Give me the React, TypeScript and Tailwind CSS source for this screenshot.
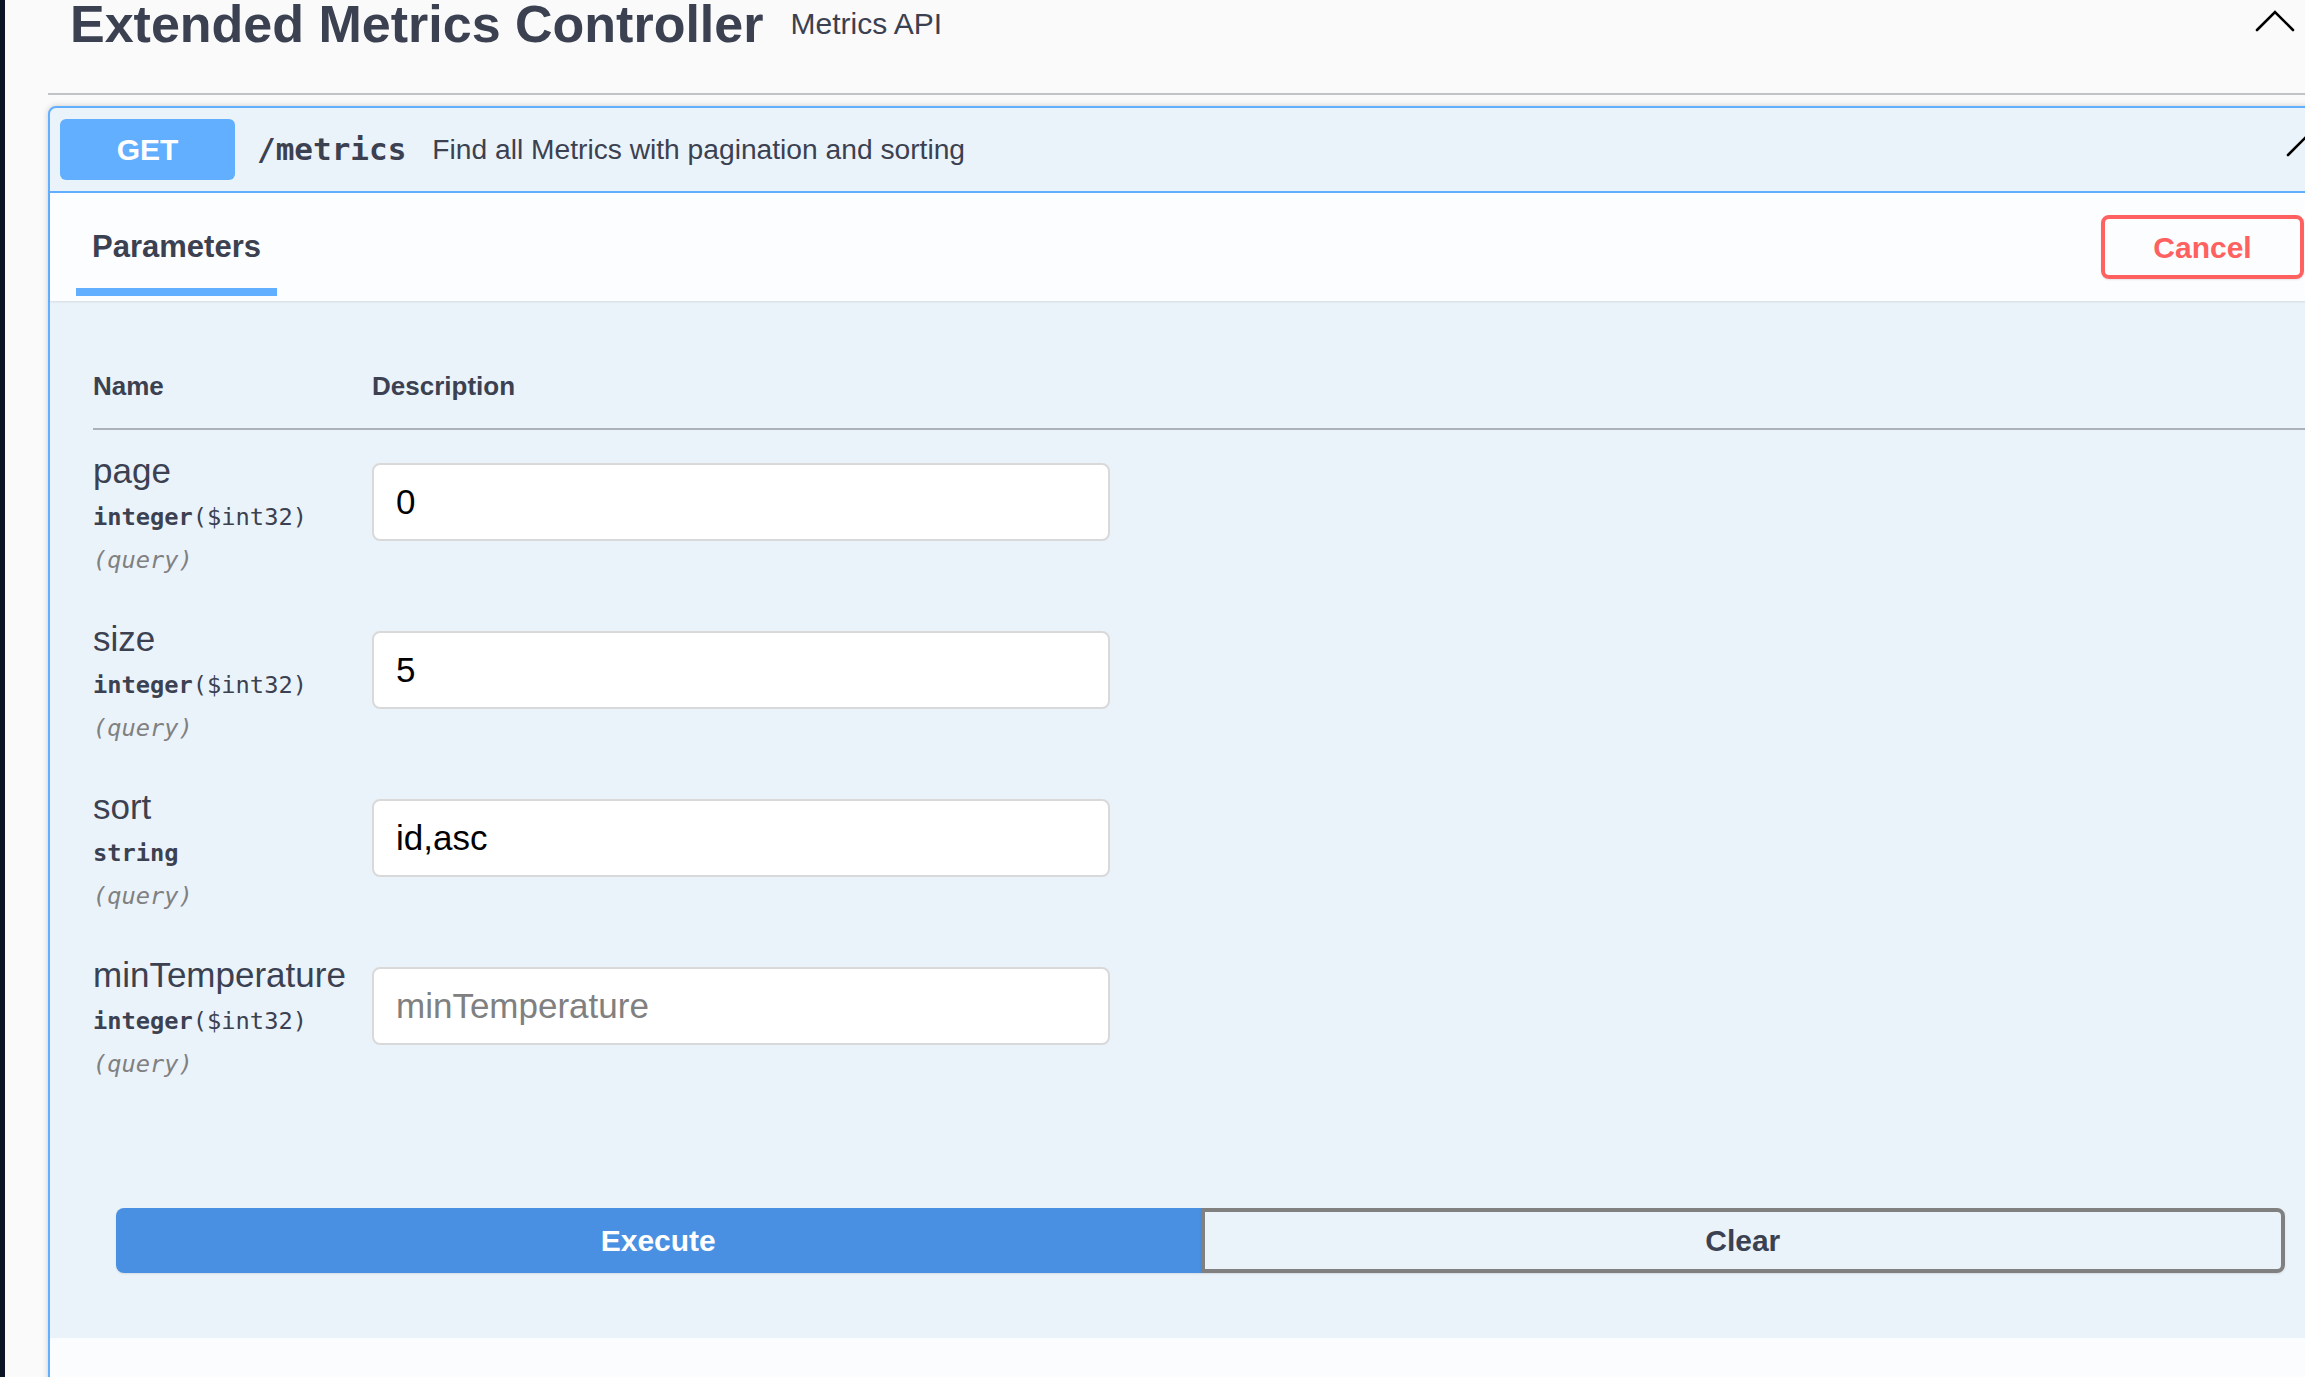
const sans = { fontFamily: '"Liberation Sans", Arial, sans-serif' };

const params = [
  { name: "page", type: "integer", format: "($int32)", value: "0" },
  { name: "size", type: "integer", format: "($int32)", value: "5" },
  { name: "sort", type: "string", format: "", value: "id,asc" },
  { name: "minTemperature", type: "integer", format: "($int32)", value: "" },
];

function Chevron({ className }: { className?: string }) {
  return (
    <svg className={className} width="40" height="22" viewBox="0 0 40 22" fill="none">
      <path d="M2 20 L20 2 L38 20" stroke="#000" strokeWidth="2.6" strokeLinecap="round" strokeLinejoin="miter" />
    </svg>
  );
}

function ParamRow({ p }: { p: (typeof params)[number] }) {
  return (
    <div className="flex h-[168px]">
      <div className="w-[279px] shrink-0 pt-[22px]">
        <div className="text-[35px] leading-[38px] text-[#3b4151]">{p.name}</div>
        <div className="mt-[13px] font-['DejaVu_Sans_Mono',monospace] text-[23.7px] leading-[28px] font-bold text-[#3b4151]">
          {p.type}
          {p.format && <span className="font-normal text-[#3b4151]">{p.format}</span>}
        </div>
        <div className="mt-[15px] font-['DejaVu_Sans_Mono',monospace] text-[23.7px] leading-[28px] italic text-[#808080]">
          (query)
        </div>
      </div>
      <div className="pt-[33px]">
        <input
          defaultValue={p.value}
          placeholder={p.name}
          className="h-[78px] w-[738px] rounded-[8px] border-2 border-[#d9d9d9] bg-white pl-[22px] text-[35px] text-black outline-none placeholder:text-[#808080]"
          style={sans}
        />
      </div>
    </div>
  );
}

export default function App() {
  return (
    <div className="flex h-screen w-screen overflow-hidden bg-[#fafafa]" style={sans}>
      <div className="w-[5px] shrink-0 bg-[#0b1426]" />
      <div className="ml-[43px] w-[2305px] shrink-0">
        {/* tag header */}
        <div className="h-[95px] border-b-2 border-[#c1c3c7]">
          <div className="flex h-[48px] items-center pl-[22px]">
            <h3 className="text-[52px] leading-[52px] font-bold text-[#3b4151]">Extended Metrics Controller</h3>
            <small className="ml-[27px] text-[30px] leading-[34px] text-[#3b4151]">Metrics API</small>
            <Chevron className="mb-[6px] ml-auto mr-[58px]" />
          </div>
        </div>

        {/* opblock */}
        <div className="mt-[11px] rounded-[8px] border-2 border-[#61affe] bg-[#ebf3fa] shadow-[0_0_6px_rgba(0,0,0,0.19)]">
          <div className="flex h-[85px] items-center border-b-2 border-[#61affe] px-[10px]">
            <div className="flex h-[61px] w-[175px] items-center justify-center rounded-[6px] bg-[#61affe] text-[30px] font-bold text-white">
              GET
            </div>
            <span className="ml-[22px] font-['DejaVu_Sans_Mono',monospace] text-[31px] font-bold text-[#3b4151]">/metrics</span>
            <span className="ml-[26px] text-[28.2px] text-[#3b4151]">Find all Metrics with pagination and sorting</span>
            <Chevron className="mb-[7px] ml-auto mr-[15px]" />
          </div>

          <div className="relative z-10 flex h-[108px] items-center justify-between bg-[#fbfdfe] shadow-[0_1px_2px_rgba(0,0,0,0.1)]">
            <div className="ml-[26px] flex w-[201px] flex-col items-center self-stretch pt-[36px]">
              <span className="text-[31px] leading-[36px] font-bold text-[#3b4151]">Parameters</span>
              <div className="mt-[23px] h-[8px] w-full bg-[#61affe]" />
            </div>
            <button className="mr-[47px] h-[64px] w-[203px] rounded-[8px] border-4 border-[#ff6060] bg-transparent text-[30px] font-bold text-[#ff6060] shadow-[0_1px_2px_rgba(0,0,0,0.1)]">
              Cancel
            </button>
          </div>

          <div className="px-[43px] pt-[70px]">
            <div className="flex border-b-2 border-[#adb1b8] pb-[27px] text-[26px] leading-[30px] font-bold text-[#3b4151]">
              <div className="w-[279px] shrink-0">Name</div>
              <div>Description</div>
            </div>
            {params.map((p) => (
              <ParamRow key={p.name} p={p} />
            ))}
            <div className="mx-[23px] mt-[106px] mb-[65px] grid h-[65px] grid-cols-2">
              <button className="rounded-l-[8px] bg-[#4990e2] text-[30px] font-bold text-white shadow-[0_1px_2px_rgba(0,0,0,0.1)]">
                Execute
              </button>
              <button className="rounded-r-[8px] border-4 border-[#808080] bg-transparent text-[30px] font-bold text-[#3b4151] shadow-[0_1px_2px_rgba(0,0,0,0.1)]">
                Clear
              </button>
            </div>
          </div>
          <div className="h-[120px] bg-[#fafcfe]" />
        </div>
      </div>
    </div>
  );
}
